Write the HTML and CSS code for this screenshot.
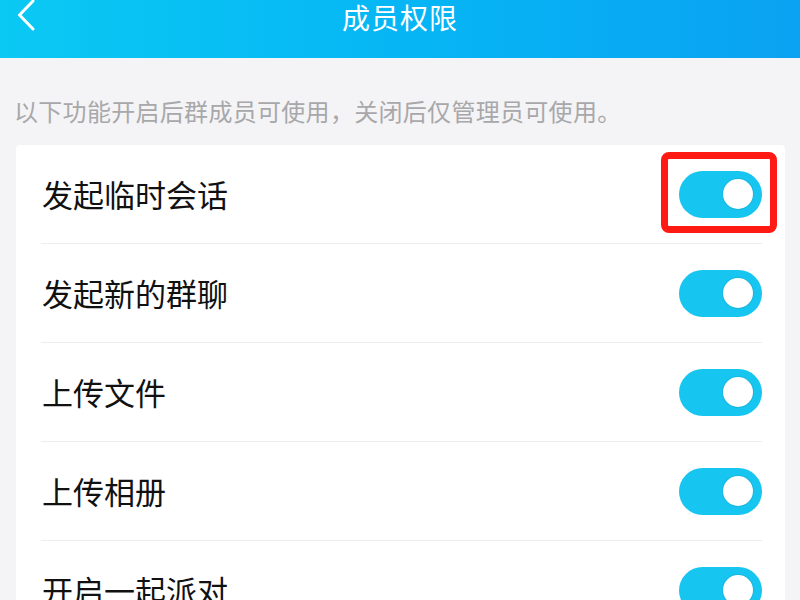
FILE: index.html
```html
<!DOCTYPE html>
<html lang="zh-CN">
<head>
<meta charset="utf-8">
<title>成员权限</title>
<link rel="stylesheet" href="styles.css">
</head>
<body>
<div class="page">
  <header class="header">
    <div class="back">
      <svg width="40" height="32" viewBox="0 0 40 32"><polyline points="33,1 19.5,15 33,29" fill="none" stroke="#fff" stroke-width="3" stroke-linecap="round" stroke-linejoin="round"/></svg>
    </div>
    <div class="title">成员权限</div>
    <div class="spacer"></div>
  </header>
  <p class="desc">以下功能开启后群成员可使用，关闭后仅管理员可使用。</p>
  <div class="card">
    <div class="row">
      <span class="label">发起临时会话</span>
      <span class="toggle"><span class="knob"></span></span>
      <span class="mark"></span>
    </div>
    <div class="row">
      <span class="label">发起新的群聊</span>
      <span class="toggle"><span class="knob"></span></span>
    </div>
    <div class="row">
      <span class="label">上传文件</span>
      <span class="toggle"><span class="knob"></span></span>
    </div>
    <div class="row">
      <span class="label">上传相册</span>
      <span class="toggle"><span class="knob"></span></span>
    </div>
    <div class="row">
      <span class="label">开启一起派对</span>
      <span class="toggle"><span class="knob"></span></span>
    </div>
  </div>
</div>
</body>
</html>
```

FILE: styles.css
```css
* { box-sizing: border-box; }
html, body {
  margin: 0;
  padding: 0;
  width: 800px;
  height: 600px;
  overflow: hidden;
  background: #f4f4f6;
  font-family: "Noto Sans CJK SC", "Noto Sans", sans-serif;
}
.page {
  width: 800px;
  height: 600px;
  overflow: hidden;
}
.header {
  height: 58px;
  background: linear-gradient(90deg, #0ac9f3 0%, #06b6f4 50%, #0aa2f2 100%);
  display: grid;
  grid-template-columns: 1fr auto 1fr;
  align-items: start;
}
.back {
  height: 32px;
  display: flex;
  align-items: flex-start;
}
.back svg { display: block; }
.title {
  color: #fff;
  font-size: 28px;
  line-height: 35px;
  height: 35px;
  letter-spacing: 1px;
}
.desc {
  margin: 0;
  padding: 37px 0 0 14px;
  height: 87px;
  font-size: 24px;
  line-height: 32px;
  letter-spacing: 0.3px;
  color: #a8a8aa;
  white-space: nowrap;
}
.card {
  margin-left: 16px;
  width: 769px;
  background: #fff;
  padding: 0 23px 0 25px;
  border-top-left-radius: 4px;
  border-top-right-radius: 4px;
}
.row {
  position: relative;
  height: 99px;
  display: flex;
  align-items: center;
  justify-content: space-between;
  border-bottom: 1px solid #ededef;
}
.label {
  padding-left: 1px;
  font-size: 31px;
  line-height: 40px;
  color: #111;
}
.toggle {
  width: 83px;
  height: 47px;
  border-radius: 24px;
  background: #16c5f0;
  display: flex;
  align-items: center;
  justify-content: flex-end;
  padding-right: 9px;
}
.knob {
  width: 30px;
  height: 30px;
  border-radius: 50%;
  background: #fff;
  box-shadow: 0 0 0 1px rgba(40, 120, 150, 0.18);
}
.mark {
  position: absolute;
  right: -15px;
  top: 7px;
  width: 116px;
  height: 81px;
  border: 7px solid #ff1a14;
  border-radius: 8px;
}
```
